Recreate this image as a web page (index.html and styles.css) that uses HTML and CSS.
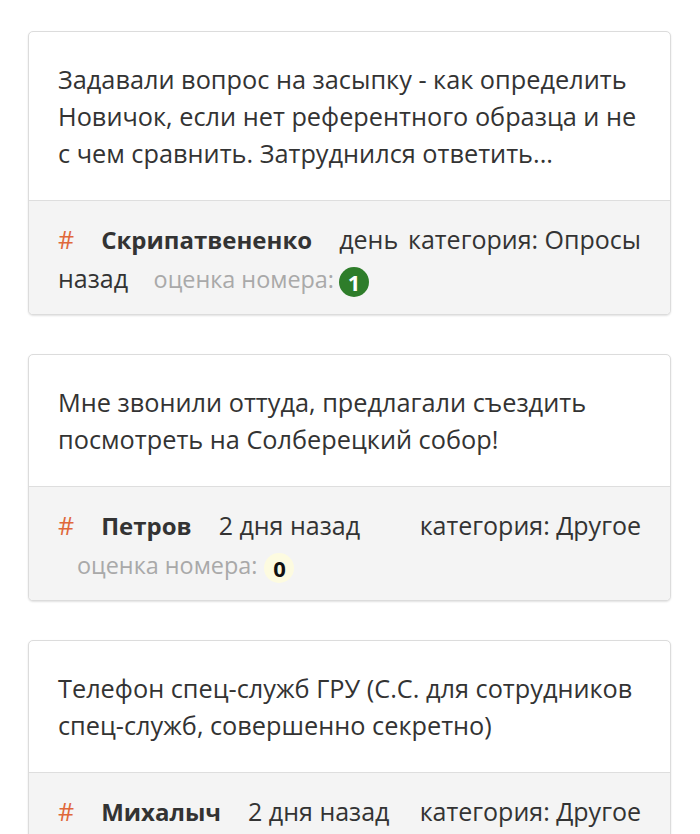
FILE: index.html
```html
<!DOCTYPE html>
<html lang="ru">
<head>
<meta charset="utf-8">
<link rel="stylesheet" href="styles.css">
</head>
<body>
<div class="list">
  <div class="card">
    <div class="card-body">Задавали вопрос на засыпку - как определить Новичок, если нет референтного образца и не с чем сравнить. Затруднился ответить...</div>
    <div class="card-foot"><span class="cat">категория: Опросы</span><span class="hash">#</span><span class="name">Скрипатвененко</span><span class="date">день назад</span> <span class="rate">оценка номера:<span class="badge good">1</span></span></div>
  </div>
  <div class="card">
    <div class="card-body">Мне звонили оттуда, предлагали съездить посмотреть на Солберецкий собор!</div>
    <div class="card-foot"><span class="cat">категория: Другое</span><span class="hash">#</span><span class="name">Петров</span><span class="date">2 дня назад</span> <span class="rate">оценка номера:<span class="badge zero spaced">0</span></span></div>
  </div>
  <div class="card">
    <div class="card-body">Телефон спец-служб ГРУ (С.С. для сотрудников спец-служб, совершенно секретно)</div>
    <div class="card-foot"><span class="cat">категория: Другое</span><span class="hash">#</span><span class="name">Михалыч</span><span class="date">2 дня назад</span> <span class="rate">оценка номера:<span class="badge zero spaced">0</span></span></div>
  </div>
</div>
</body>
</html>
```

FILE: styles.css
```css
html, body {
  margin: 0;
  padding: 0;
  background: #ffffff;
}
body {
  font-family: "Open Sans", "Noto Sans", sans-serif;
  color: #333333;
}
.list {
  padding: 31px 29px 0 28px;
  display: flex;
  flex-direction: column;
  gap: 39px;
}
.card {
  border: 1px solid #dcdcdc;
  border-radius: 5px;
  box-shadow: 0 1px 2px rgba(0,0,0,0.12);
  overflow: hidden;
  background: #fff;
}
.card-body {
  padding: 29px 29px 28px 29px;
  font-size: 25.3px;
  line-height: 37px;
}
.card-foot {
  background: #f4f4f4;
  border-top: 1px solid #dedede;
  padding: 19px 29px 17px 29px;
  font-size: 25px;
  line-height: 38px;
}
.card-foot::after {
  content: "";
  display: block;
  clear: both;
}
.cat {
  float: right;
}
.hash {
  color: #e0683a;
  margin-right: 27px;
}
.name {
  font-weight: 700;
  font-size: 24px;
  margin-right: 27px;
}
.rate {
  color: #a9a9a9;
  font-size: 23.4px;
  line-height: 1;
  margin-left: 19px;
  white-space: nowrap;
}
.badge {
  display: inline-block;
  width: 30px;
  height: 30px;
  border-radius: 50%;
  text-align: center;
  line-height: 30px;
  font-weight: 700;
  font-size: 22px;
  vertical-align: middle;
  margin-left: 5px;
}
.spaced {
  margin-left: 7px;
}
.good {
  background: #2e7d2a;
  color: #ffffff;
}
.zero {
  background: #fdfbe0;
  color: #111111;
}
```
